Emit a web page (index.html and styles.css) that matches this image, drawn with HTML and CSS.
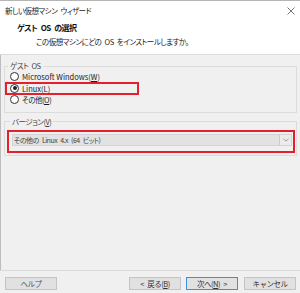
FILE: index.html
```html
<!DOCTYPE html>
<html>
<head>
  <link rel="stylesheet" href="styles.css">
</head>
<body>
  <div class="window">
    <div class="titlebar">
      <span class="title jp">新しい仮想マシン ウィザード</span>
      <svg class="close" width="8" height="8" viewBox="0 0 8 8">
        <path d="M0.5 0.5 L7.5 7.5 M7.5 0.5 L0.5 7.5" stroke="#666" stroke-width="0.9" fill="none"/>
      </svg>
    </div>

    <div class="header">
      <div class="header-title jp">ゲスト OS の選択</div>
      <div class="header-sub jp">この仮想マシンにどの OS をインストールしますか。</div>
    </div>

    <div class="content">
      <fieldset class="group">
        <legend class="jp">ゲスト OS</legend>
        <div class="radio-row">
          <span class="radio"></span>
          <span>Microsoft Windows(<u>W</u>)</span>
        </div>
        <div class="radio-row mark">
          <span class="radio checked"></span>
          <span>Linux(<u>L</u>)</span>
        </div>
        <div class="radio-row">
          <span class="radio"></span>
          <span class="jp">その他(<u>O</u>)</span>
        </div>
      </fieldset>

      <fieldset class="group version">
        <legend class="jp">バージョン(<u>V</u>)</legend>
        <div class="select-wrap mark">
          <div class="select">
            <div class="select-field jp">その他の Linux 4.x (64 ビット)</div>
            <div class="select-arrow">
              <svg width="6" height="4" viewBox="0 0 6 4">
                <path d="M0.5 0.8 L3 3.2 L5.5 0.8" stroke="#888" stroke-width="0.8" fill="none"/>
              </svg>
            </div>
          </div>
        </div>
      </fieldset>
    </div>

    <div class="footer">
      <button class="btn help jp">ヘルプ</button>
      <div class="spacer"></div>
      <button class="btn jp">&lt; 戻る(<u>B</u>)</button>
      <button class="btn default jp">次へ(<u>N</u>) &gt;</button>
      <button class="btn jp">キャンセル</button>
    </div>
  </div>
</body>
</html>
```

FILE: styles.css
```css
body {
  margin: 0;
  padding: 0;
  font-family: "Noto Sans CJK JP", sans-serif;
  font-feature-settings: "palt" 1;
  font-size: 7.5px;
  color: #222;
}

.jp {
  letter-spacing: -0.5px;
  word-spacing: 2px;
}

.window {
  width: 300px;
  height: 293px;
  box-sizing: border-box;
  display: flex;
  flex-direction: column;
  background: #f0f0f0;
  border-top: 1px solid #b5b5b5;
}

.titlebar {
  height: 19px;
  display: flex;
  align-items: center;
  justify-content: space-between;
  padding: 0 5px 0 5px;
  background: #fff;
  color: #222;
}

.header {
  height: 35px;
  background: #fff;
  border-bottom: 1px solid #dcdcdc;
  padding-left: 17px;
  box-sizing: border-box;
  padding-top: 3px;
}

.header-title {
  font-size: 8px;
  font-weight: 700;
  line-height: 10px;
  color: #111;
}

.header-sub {
  margin-top: 4px;
  padding-left: 19px;
  line-height: 10px;
  color: #1a1a1a;
}

.content {
  flex: 1;
  padding: 6px 3px 0 3px;
  border-left: 1px solid #bdbdbd;
}

.group {
  margin: 0;
  padding: 0 0 6px 1px;
  border: 1px solid #dcdcdc;
  min-width: 0;
}

.group legend {
  margin-left: 2px;
  padding: 0 2px;
  line-height: 10px;
  color: #444;
}

.radio-row {
  width: 128px;
  height: 11.5px;
  display: flex;
  align-items: center;
  gap: 3px;
  padding-left: 4px;
  color: #1a1a1a;
}

.radio {
  width: 7px;
  height: 7px;
  border: 1px solid #333;
  border-radius: 50%;
  background: #fff;
  position: relative;
  flex-shrink: 0;
}

.radio.checked::after {
  content: "";
  position: absolute;
  left: 1.5px;
  top: 1.5px;
  width: 4px;
  height: 4px;
  border-radius: 50%;
  background: #222;
}

.mark {
  outline: 2px solid #e3202b;
  outline-offset: -1px;
}

.version {
  margin-top: 4px;
  padding: 0 2px 3px 3px;
}

.select-wrap {
  margin-top: 4px;
  padding: 3px 2px 6px 4px;
}

.select {
  height: 12px;
  display: flex;
  border: 1px solid #d4d4d4;
  background: #ececec;
  box-sizing: border-box;
}

.select-field {
  flex: 1;
  background: #e2e2e2;
  border-right: 1px solid #cdcdcd;
  font-size: 7px;
  line-height: 10px;
  padding-left: 1px;
  color: #444;
}

.select-arrow {
  width: 11px;
  display: flex;
  align-items: center;
  justify-content: center;
}

.footer {
  display: flex;
  padding: 6px 4px 3px 5px;
  border-top: 1px solid #dadada;
}

.spacer {
  flex: 1;
}

.btn {
  width: 52px;
  height: 13px;
  padding: 0;
  margin-left: 5px;
  font-family: inherit;
  font-size: 7.5px;
  line-height: 11px;
  color: #333;
  background: #e1e1e1;
  border: 1px solid #c4c4c4;
}

.btn.help {
  margin-left: 0;
  color: #555;
}

.btn.default {
  border-color: #3b8fdb;
  margin-right: 1px;
}
```
